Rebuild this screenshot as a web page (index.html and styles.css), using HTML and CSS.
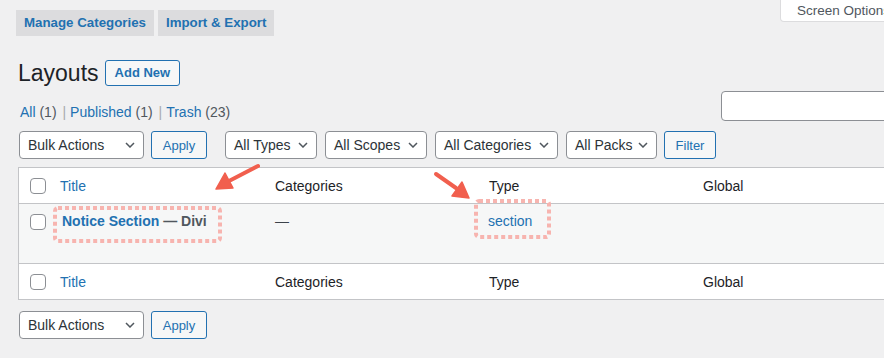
FILE: index.html
```html
<!DOCTYPE html>
<html lang="en">
<head>
  <meta charset="UTF-8" />
  <title>Layouts</title>
  <link rel="stylesheet" href="styles.css">
</head>
<body>
  <div class="page">
    <!-- top tabs + screen options -->
    <div class="topbar">
      <nav class="tabs">
        <a href="#" class="tab">Manage Categories</a>
        <a href="#" class="tab">Import &amp; Export</a>
      </nav>
      <div class="screen-opts">Screen Options</div>
    </div>

    <div class="heading">
      <h1>Layouts</h1>
      <a href="#" class="btn-outline">Add New</a>
    </div>

    <div class="views-row">
      <ul class="subsubsub">
        <li><a href="#">All</a> <span class="count">(1)</span> <span class="sep">|</span></li>
        <li><a href="#">Published</a> <span class="count">(1)</span> <span class="sep">|</span></li>
        <li><a href="#">Trash</a> <span class="count">(23)</span></li>
      </ul>
      <input type="search" class="search" />
    </div>

    <div class="tablenav">
      <div class="select w-bulk">Bulk Actions <svg width="10" height="6" viewBox="0 0 10 6"><path d="M1 1l4 4 4-4" fill="none" stroke="#50575e" stroke-width="1.5"/></svg></div>
      <button class="btn-apply w-apply">Apply</button>
      <div class="select w-types">All Types <svg width="10" height="6" viewBox="0 0 10 6"><path d="M1 1l4 4 4-4" fill="none" stroke="#50575e" stroke-width="1.5"/></svg></div>
      <div class="select w-scopes">All Scopes <svg width="10" height="6" viewBox="0 0 10 6"><path d="M1 1l4 4 4-4" fill="none" stroke="#50575e" stroke-width="1.5"/></svg></div>
      <div class="select w-cats">All Categories <svg width="10" height="6" viewBox="0 0 10 6"><path d="M1 1l4 4 4-4" fill="none" stroke="#50575e" stroke-width="1.5"/></svg></div>
      <div class="select w-packs">All Packs <svg width="10" height="6" viewBox="0 0 10 6"><path d="M1 1l4 4 4-4" fill="none" stroke="#50575e" stroke-width="1.5"/></svg></div>
      <button class="btn-apply w-filter">Filter</button>
    </div>

    <div class="list-table">
      <div class="tr thead">
        <div class="cb"><span class="checkbox"></span></div>
        <div class="td"><a href="#">Title</a></div>
        <div class="td">Categories</div>
        <div class="td">Type</div>
        <div class="td">Global</div>
      </div>
      <div class="tr item">
        <div class="cb"><span class="checkbox"></span></div>
        <div class="td title-cell"><a href="#" class="row-title">Notice Section</a> <span class="post-state">— Divi</span></div>
        <div class="td muted">—</div>
        <div class="td type-cell"><a href="#">section</a></div>
        <div class="td"></div>
      </div>
      <div class="tr tfoot">
        <div class="cb"><span class="checkbox"></span></div>
        <div class="td"><a href="#">Title</a></div>
        <div class="td">Categories</div>
        <div class="td">Type</div>
        <div class="td">Global</div>
      </div>
    </div>

    <div class="tablenav bottom">
      <div class="select w-bulk">Bulk Actions <svg width="10" height="6" viewBox="0 0 10 6"><path d="M1 1l4 4 4-4" fill="none" stroke="#50575e" stroke-width="1.5"/></svg></div>
      <button class="btn-apply w-apply">Apply</button>
    </div>
  </div>

  <!-- annotation overlay: arrows and dotted highlight boxes -->
  <svg class="annot" width="884" height="358" viewBox="0 0 884 358">
    <g fill="none" stroke="#f7b4af" stroke-width="4" stroke-dasharray="4 3">
      <rect x="55" y="208" width="165" height="33" rx="3" />
      <rect x="476" y="201" width="73" height="36" rx="3" />
    </g>
    <g stroke="#f15f4e" stroke-width="4" stroke-linecap="round" fill="#f15f4e">
      <line x1="258" y1="166" x2="229" y2="181" />
      <polygon points="216,189 233,188 225,173" stroke-width="1.5" stroke-linejoin="round" />
      <line x1="436" y1="174" x2="456" y2="188" />
      <polygon points="469,198 452,196 462,182" stroke-width="1.5" stroke-linejoin="round" />
    </g>
  </svg>
</body>
</html>
```

FILE: styles.css
```css
/* wp-admin style list screen */
body {
  margin: 0;
  background: #f0f0f1;
  color: #3c434a;
  font-family: "Liberation Sans", Arial, sans-serif;
  font-size: 13px;
  overflow: hidden;
  position: relative;
  width: 884px;
  height: 358px;
}
a {
  color: #2271b1;
  text-decoration: none;
}
.page {
  width: 880px;
  padding-left: 18px;
}
.topbar {
  display: flex;
  justify-content: space-between;
  align-items: flex-start;
}
.tabs {
  display: flex;
  gap: 4px;
  margin-top: 10px;
  margin-left: -2px;
}
.tab {
  height: 26px;
  line-height: 26px;
  padding: 0 8px;
  background: #dcdcde;
  font-size: 13.3px;
  font-weight: bold;
}
.screen-opts {
  width: 118px;
  height: 22px;
  line-height: 21px;
  padding-left: 16px;
  box-sizing: border-box;
  background: #fff;
  border: 1px solid #dcdcde;
  border-top: none;
  border-radius: 0 0 0 4px;
  color: #50575e;
  font-size: 13.5px;
  white-space: nowrap;
  overflow: hidden;
}
.heading {
  display: flex;
  align-items: center;
  height: 26px;
  margin-top: 24px;
}
h1 {
  margin: 0;
  font-size: 23px;
  font-weight: 400;
  line-height: 26px;
  color: #1d2327;
}
.btn-outline {
  margin-left: 6px;
  height: 26px;
  line-height: 24px;
  padding: 0 9px;
  box-sizing: border-box;
  border: 1px solid #2271b1;
  border-radius: 3px;
  background: #f6f7f7;
  font-weight: bold;
}
.views-row {
  display: flex;
  justify-content: space-between;
  align-items: flex-start;
  margin-top: 5px;
  height: 30px;
}
.subsubsub {
  list-style: none;
  display: flex;
  gap: 4px;
  margin: 11px 0 0 2px;
  padding: 0;
  line-height: 20px;
  font-size: 14px;
  color: #50575e;
}
.subsubsub .sep {
  color: #a7aaad;
  margin-left: 2px;
}
.search {
  width: 177px;
  height: 30px;
  box-sizing: border-box;
  margin: 0;
  border: 1px solid #8c8f94;
  border-radius: 4px;
  background: #fff;
}
.tablenav {
  display: flex;
  align-items: center;
  gap: 8px;
  height: 28px;
  margin-top: 10px;
  padding-left: 1px;
}
.tablenav.bottom {
  margin-top: 11px;
}
.select {
  display: flex;
  align-items: center;
  justify-content: space-between;
  height: 28px;
  padding: 0 8px;
  box-sizing: border-box;
  border: 1px solid #8c8f94;
  border-radius: 4px;
  background: #fff;
  color: #2c3338;
  font-size: 14px;
  white-space: nowrap;
}
.btn-apply {
  height: 28px;
  padding: 0;
  border: 1px solid #2271b1;
  border-radius: 3px;
  background: #f6f7f7;
  color: #2271b1;
  font-family: inherit;
  font-size: 13px;
}
.w-bulk { width: 125px; }
.w-apply { width: 56px; margin-left: -1px; margin-right: 10px; }
.w-types { width: 92px; }
.w-scopes { width: 102px; }
.w-cats { width: 123px; }
.w-packs { width: 91px; margin-right: -1px; }
.w-filter { width: 52px; }
.list-table {
  margin-top: 8px;
  border: 1px solid #c3c4c7;
  background: #fff;
  color: #1d2327;
  font-size: 14px;
}
.tr {
  display: grid;
  grid-template-columns: 33px 215px 214px 214px 1fr;
}
.thead, .tfoot {
  height: 35px;
  align-items: center;
}
.thead {
  border-bottom: 1px solid #c3c4c7;
}
.tfoot {
  border-top: 1px solid #c3c4c7;
}
.td {
  padding-left: 8px;
  line-height: 20px;
}
.cb {
  padding-left: 11px;
  display: flex;
}
.checkbox {
  width: 16px;
  height: 16px;
  box-sizing: border-box;
  border: 1px solid #8c8f94;
  border-radius: 4px;
  background: #fff;
}
.item {
  height: 59px;
  background: #f6f7f7;
}
.item .td {
  padding-top: 7px;
}
.item .cb {
  padding-top: 10px;
  align-items: flex-start;
}
.title-cell {
  padding-left: 10px;
  white-space: nowrap;
}
.row-title {
  font-weight: bold;
}
.post-state {
  font-weight: bold;
  color: #50575e;
}
.muted {
  color: #3c434a;
}
.type-cell {
  padding-left: 7px;
}
.annot {
  position: absolute;
  top: 0;
  left: 0;
  pointer-events: none;
}
```
